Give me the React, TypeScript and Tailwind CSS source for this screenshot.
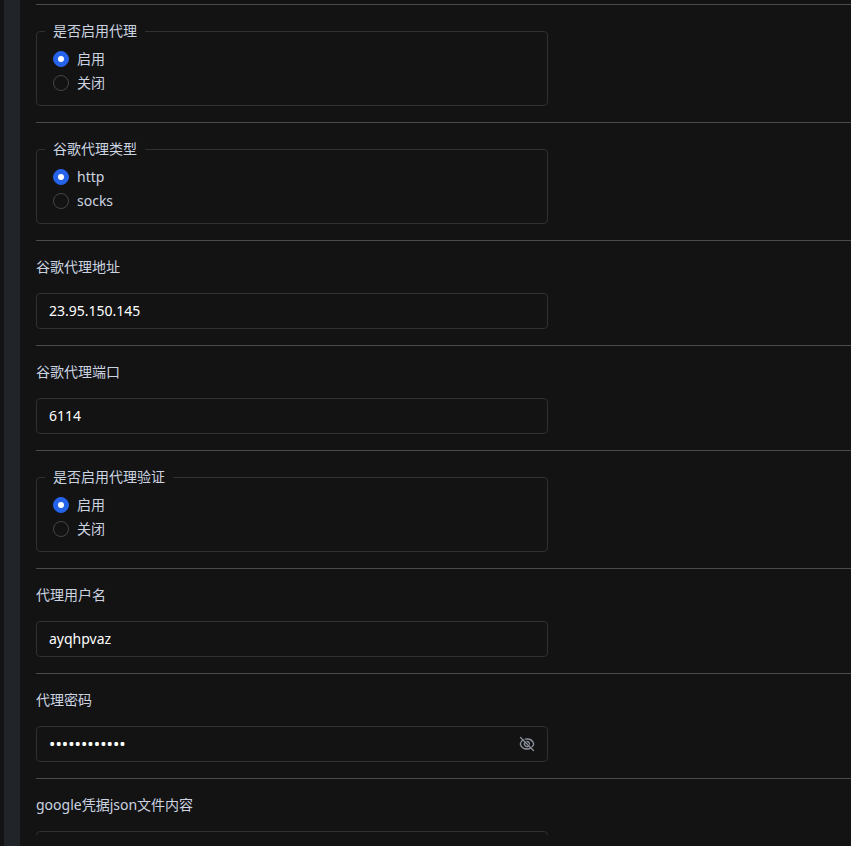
import { useState, type ReactNode } from "react";

function Row({ children }: { children: ReactNode }) {
  return <div className="border-t border-[#4b4b4d] py-4">{children}</div>;
}

function RadioGroup({ name, legend, options }: { name: string; legend: string; options: string[] }) {
  const [value, setValue] = useState(options[0]);
  return (
    <Row>
      <fieldset className="max-w-lg rounded border border-[#303032] px-2 pt-[6px] pb-[10px]">
        <legend className="px-2">{legend}</legend>
        {options.map((option) => (
          <label key={option} className="flex h-6 items-center gap-2 px-2">
            <input
              type="radio"
              name={name}
              checked={value === option}
              onChange={() => setValue(option)}
              className="flex size-4 appearance-none items-center justify-center rounded-full border border-[#45464c] before:size-[6px] before:rounded-full checked:border-[#2563eb] checked:bg-[#2563eb] checked:before:bg-white"
            />
            {option}
          </label>
        ))}
      </fieldset>
    </Row>
  );
}

const boxClass = "block w-full rounded border border-[#303032] bg-transparent px-3 text-white outline-none";

function TextField({ id, label, initial }: { id: string; label: string; initial: string }) {
  return (
    <Row>
      <div className="flex max-w-lg flex-col gap-4">
        <label htmlFor={id}>{label}</label>
        <input id={id} type="text" defaultValue={initial} className={`${boxClass} h-9 pb-[2px]`} />
      </div>
    </Row>
  );
}

function PasswordField({ id, label, initial }: { id: string; label: string; initial: string }) {
  const [shown, setShown] = useState(false);
  return (
    <Row>
      <div className="flex max-w-lg flex-col gap-4">
        <label htmlFor={id}>{label}</label>
        <div className="flex h-9 items-center rounded border border-[#303032] px-3">
          <input
            id={id}
            type={shown ? "text" : "password"}
            defaultValue={initial}
            className={`min-w-0 flex-1 bg-transparent text-white outline-none ${shown ? "text-sm" : "text-[17px]"}`}
          />
          <button type="button" aria-label="显示密码" onClick={() => setShown(!shown)} className="text-[#8b919c]">
            <svg viewBox="0 0 16 16" className="size-4" fill="none" stroke="currentColor" strokeWidth="1.3" strokeLinecap="round">
              <path d="M1.5 1.5l13 13" />
              <path d="M4 3.8C2.7 4.8 1.7 6.3 1.3 8c.8 3 3.5 5 6.7 5 1.4 0 2.7-.4 3.8-1.100" />
              <path d="M6.2 3.2C6.8 3.1 7.4 3 8 3c3.2 0 5.9 2 6.7 5-.3 1.1-.9 2.1-1.7 2.9" />
              <path d="M6.2 6.2a2.500 2.500 0 0 0 3.6 3.6M8 5.5A2.500 2.500 0 0 1 10.5 8" />
            </svg>
          </button>
        </div>
      </div>
    </Row>
  );
}

export default function App() {
  return (
    <div className="flex h-screen overflow-hidden bg-[#131313] pl-1 font-['Noto_Sans','Noto_Sans_CJK_SC',sans-serif] text-sm/5 text-[#ccd3e0]">
      <div className="w-4 shrink-0 bg-[#212429]" />
      <div className="min-w-0 flex-1 pb-[11px]">
        <form className="h-full overflow-hidden pt-1 pl-4">
          <RadioGroup name="proxy" legend="是否启用代理" options={["启用", "关闭"]} />
          <RadioGroup name="type" legend="谷歌代理类型" options={["http", "socks"]} />
          <TextField id="host" label="谷歌代理地址" initial="23.95.150.145" />
          <TextField id="port" label="谷歌代理端口" initial="6114" />
          <RadioGroup name="auth" legend="是否启用代理验证" options={["启用", "关闭"]} />
          <TextField id="user" label="代理用户名" initial="ayqhpvaz" />
          <PasswordField id="password" label="代理密码" initial="abcdefghijkl" />
          <Row>
            <div className="flex max-w-lg flex-col gap-4">
              <label htmlFor="json">google凭据json文件内容</label>
              <textarea id="json" rows={6} className={`${boxClass} resize-none py-2`} />
            </div>
          </Row>
        </form>
      </div>
    </div>
  );
}
